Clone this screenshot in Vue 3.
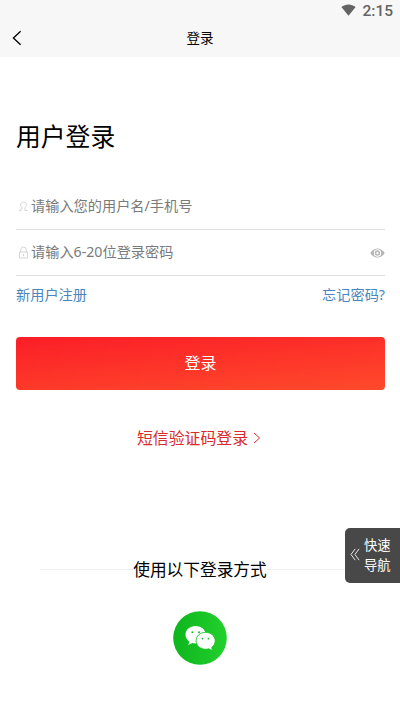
<script setup>
import { ref } from 'vue'

const username = ref('')
const password = ref('')
</script>

<template>
  <main class="page">
    <header class="top">
      <div class="status">
        <svg class="wifi" viewBox="0 0 16 13"><path d="M.3 3.2C4.800-.5 11.200-.5 15.700 3.200L8 12.800Z" /></svg>
        <span>2:15</span>
      </div>
      <nav class="nav">
        <svg class="back" viewBox="0 0 10 16"><path d="M8.600 1.200 1.400 8l7.200 6.800" /></svg>
        <h1>登录</h1>
      </nav>
    </header>

    <form class="form" @submit.prevent>
      <h2>用户登录</h2>
      <label class="field">
        <svg class="lead" viewBox="0 0 12 14"><path d="M4.400 8.200C1.700 5.800 2.800 2.200 6 2.200s4.300 3.600 1.600 6v3.200h3.200M4.400 8.200v1.600l-2.900 1.600h2" /></svg>
        <input v-model="username" type="text" placeholder="请输入您的用户名/手机号" />
      </label>
      <label class="field">
        <svg class="lead" viewBox="0 0 12 14"><path d="M3 6.500V4a3 3 0 0 1 6 0v2.500M1.500 6.500h9V13h-9ZM6 8.500v2.500" /></svg>
        <input v-model="password" type="password" placeholder="请输入6-20位登录密码" />
        <svg class="eye" viewBox="0 0 15 10">
          <path d="M.3 5C3.800-1.100 11.200-1.100 14.700 5 11.200 11.100 3.800 11.100.3 5Z" fill="#b5b5b5" />
          <circle cx="7.500" cy="5" r="3.700" fill="#fff" />
          <circle cx="7.500" cy="5" r="2.700" fill="#b5b5b5" />
          <circle cx="7.500" cy="5" r="1.200" fill="#fff" />
        </svg>
      </label>
      <div class="links"><a>新用户注册</a><a>忘记密码?</a></div>
      <button class="submit">登录</button>
      <a class="sms">
        <span>短信验证码登录</span>
        <svg viewBox="0 0 8 12"><path d="m1 1 5.600 5L1 11" /></svg>
      </a>
    </form>

    <section class="other">
      <div class="divider"><span>使用以下登录方式</span></div>
      <svg class="wechat" viewBox="0 0 54 54">
        <defs>
          <linearGradient id="green" x1="0" x2="1"><stop stop-color="#0eb51d" /><stop offset="1" stop-color="#22d12d" /></linearGradient>
        </defs>
        <circle cx="27" cy="27" r="26.800" fill="url(#green)" />
        <path d="M22.600 15c-5.700 0-10.100 3.900-10.100 8.800 0 2.800 1.500 5.200 3.900 6.800l-1.100 3.500 4-2.100c1.100.3 2.200.5 3.400.5 5.700 0 10.200-3.900 10.200-8.700S28.300 15 22.600 15Z" fill="#fff" />
        <path d="M32.600 21.300c-5.400 0-9.500 3.700-9.500 8.500s4.100 8.500 9.500 8.500c1.200 0 2.200-.2 3.200-.5l3.700 2-.8-3.300c2.100-1.600 3.500-3.900 3.500-6.700 0-4.800-4.200-8.500-9.600-8.500Z" fill="#fff" stroke="#19c427" stroke-width=".9" />
        <g fill="#19be26"><circle cx="19.400" cy="21.200" r="1" /><circle cx="26" cy="21.200" r="1" /><circle cx="29.500" cy="27.600" r=".9" /><circle cx="35.500" cy="27.600" r=".9" /></g>
      </svg>
    </section>

    <aside class="quick">
      <svg viewBox="0 0 9 12"><path d="M4.700.8.8 6l3.900 5.200M8.300.8 4.400 6l3.900 5.200" /></svg>
      <span>快速<br />导航</span>
    </aside>
  </main>
</template>

<style>
body { margin: 0; background: #fff; }
</style>

<style scoped>
* { box-sizing: border-box; }
.page {
  position: relative;
  height: 711px;
  overflow: hidden;
  background: #fff;
  color: #000;
  font-family: "Noto Sans", "Noto Sans CJK SC", sans-serif;
}
.top { height: 57px; background: #f7f7f7; }
.status {
  height: 21px;
  display: flex;
  justify-content: flex-end;
  align-items: center;
  gap: 6px;
  padding: 1px 7px 0 0;
  color: #646464;
  font: 500 15.500px/20px Roboto, sans-serif;
}
.wifi { width: 15px; height: 12px; fill: #646464; margin-top: -2px; }
.nav { height: 34px; display: grid; grid-template-columns: 36px 1fr 36px; align-items: center; }
.back { width: 10px; height: 16px; margin-left: 12px; }
.back path, .sms path, .quick path, .lead path { fill: none; stroke: currentColor; }
.back path { stroke-width: 1.300; }
h1 { margin: 0; padding-bottom: 1px; text-align: center; font-size: 13.500px; line-height: 20px; font-weight: 400; }
.form { padding: 60px 15px 0 16px; display: flex; flex-direction: column; }
h2 { margin: 0 0 27px; font-size: 24.800px; line-height: 39px; height: 40px; font-weight: 400; }
.field { height: 46px; display: flex; align-items: center; border-bottom: 1px solid #dedede; padding: 0 0 2px 2px; }
.lead { width: 11px; height: 13px; flex: none; margin: 2px 2px 0 0; color: #c6c6c6; }
.lead path { stroke-width: .8; }
input { flex: 1; min-width: 0; height: 30px; padding: 0; border: 0; outline: 0; background: none; font: 14.200px/30px "Noto Sans", "Noto Sans CJK SC", sans-serif; }
input::placeholder { color: #7a7a7a; opacity: 1; }
.eye { width: 15px; height: 10px; margin-top: 2px; }
.links { display: flex; justify-content: space-between; height: 61px; padding-top: 9px; font-size: 14.200px; line-height: 20px; color: #4a86bd; }
.submit { height: 53px; border: 0; border-radius: 4px; padding: 0 0 2px; background: linear-gradient(175deg, #fb1e27, #ff4a2b); color: #fff; font: 16px/24px "Noto Sans", "Noto Sans CJK SC", sans-serif; }
.sms { display: flex; justify-content: center; align-items: center; gap: 5px; height: 24px; margin-top: 36px; padding-right: 3px; font-size: 15.900px; line-height: 24px; color: #d92b2b; }
.sms svg { width: 8px; height: 12px; }
.other { margin-top: 108px; padding-left: 40px; padding-right: 40px; display: flex; flex-direction: column; align-items: center; }
.divider { width: 100%; height: 24px; display: flex; align-items: center; font-size: 16.700px; line-height: 24px; }
.divider::before, .divider::after { content: ""; flex: 1; height: 1px; margin-bottom: 2px; background: #eee; }
.wechat { width: 54px; height: 54px; margin-top: 29px; }
.quick {
  position: absolute;
  right: 0;
  top: 528px;
  width: 55px;
  height: 55px;
  display: flex;
  align-items: center;
  gap: 4px;
  padding: 0 0 2px 5px;
  border-radius: 5px 0 0 5px;
  background: #484848;
  color: #fff;
  font-size: 13.300px;
  line-height: 20px;
}
.quick svg { width: 10px; height: 13px; flex: none; }
.quick span { white-space: nowrap; }
.quick path { stroke-width: .8; }
</style>
